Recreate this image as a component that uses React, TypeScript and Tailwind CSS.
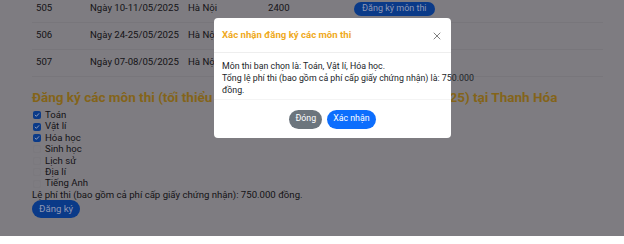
import { X } from 'lucide-react';

// Page behind the modal is drawn in its dimmed (backdrop) colours.
const rows = [
  { code: '505', date: 'Ngày 10-11/05/2025', place: 'Hà Nội', seats: '2400', action: true },
  { code: '506', date: 'Ngày 24-25/05/2025', place: 'Hà Nội', seats: '', action: false },
  { code: '507', date: 'Ngày 07-08/05/2025', place: 'Hà Nội', seats: '', action: false },
];

const subjects = [
  { name: 'Toán', checked: true },
  { name: 'Vật lí', checked: true },
  { name: 'Hóa học', checked: true },
  { name: 'Sinh học', checked: false },
  { name: 'Lịch sử', checked: false },
  { name: 'Địa lí', checked: false },
  { name: 'Tiếng Anh', checked: false },
];

function CheckBox({ checked }: { checked: boolean }) {
  if (!checked) return <span className="w-[8px] h-[8px] rounded-[2px] border border-[#7b797e] shrink-0" />;
  return (
    <span className="w-[8px] h-[8px] rounded-[2px] bg-[#0a3a88] flex items-center justify-center shrink-0">
      <svg viewBox="0 0 10 10" className="w-[6px] h-[6px]">
        <path d="M2 5.2l2 2 4-4.4" fill="none" stroke="#9aa3bd" strokeWidth="1.6" strokeLinecap="round" strokeLinejoin="round" />
      </svg>
    </span>
  );
}

export default function App() {
  return (
    <div className="relative w-[624px] h-[244px] overflow-hidden bg-white font-['Roboto',sans-serif]">
      <div className="h-[236px] bg-[#7e7c81] text-[#141316] px-[32px] overflow-hidden">
        <table className="-mt-[5px] w-[571px] border-collapse text-[9.6px]">
          <tbody>
            {rows.map((r) => (
              <tr key={r.code} className="h-[27px] border-b border-[#78767b]">
                <td className="w-[54px] pl-[4px]">{r.code}</td>
                <td className="w-[98px] pl-[4px]">{r.date}</td>
                <td className="w-[78px] pl-[4px]">{r.place}</td>
                <td className="w-[86px] pl-[6px]">{r.seats}</td>
                <td className="w-[153px] pl-[6px]">
                  {r.action && (
                    <span className="inline-flex items-center h-[14px] px-[8px] rounded-full bg-[#0a3a88] text-[#8f98b4] text-[9px]">
                      Đăng ký môn thi
                    </span>
                  )}
                </td>
                <td />
              </tr>
            ))}
          </tbody>
        </table>

        <h2 className="mt-[11px] text-[13.5px] leading-[18px] font-bold text-[#846419] whitespace-nowrap">
          Đăng ký các môn thi (tối thiểu 1 môn) cho kỳ thi đánh giá 7-08/05/2025) tại Thanh Hóa
        </h2>

        <div className="mt-[4px] flex flex-col">
          {subjects.map((s) => (
            <label key={s.name} className="flex items-center gap-[4px] h-[11.4px] pl-[1px] text-[9.6px]">
              <CheckBox checked={s.checked} />
              <span>{s.name}</span>
            </label>
          ))}
        </div>

        <p className="text-[9.6px] leading-[11px]">Lệ phí thi (bao gồm cả phí cấp giấy chứng nhận): 750.000 đồng.</p>
        <button className="block h-[18px] px-[7px] rounded-full bg-[#0a3a88] text-[#8f98b4] text-[9.6px] leading-[18px]">Đăng ký</button>
      </div>

      <div className="absolute left-[214px] top-[18px] w-[237px] h-[120px] bg-white rounded-[4px] flex flex-col text-[#212529]">
        <div className="h-[34px] flex items-center justify-between px-[8px] border-b border-[#eeeeee] mt-[1px]">
          <span className="text-[9.6px] font-bold text-[#efaa1d]">Xác nhận đăng ký các môn thi</span>
          <X className="w-[12px] h-[12px] text-[#555]" strokeWidth={1.5} />
        </div>
        <div className="px-[8px] pt-[7px] text-[8.8px] leading-[12px] h-[47px] border-b border-[#f4f4f4] whitespace-nowrap">
          <p>Môn thi bạn chọn là: Toán, Vật lí, Hóa học.</p>
          <p>
            Tổng lệ phí thi (bao gồm cả phí cấp giấy chứng nhận) là: 750.000
            <br />
            đồng.
          </p>
        </div>
        <div className="flex-1 flex items-center justify-center gap-[5px]">
          <button className="h-[19px] px-[6px] rounded-full bg-[#6c757d] text-white text-[8.8px]">Đóng</button>
          <button className="h-[19px] px-[6px] rounded-full bg-[#0d6efd] text-white text-[8.8px]">Xác nhận</button>
        </div>
      </div>
    </div>
  );
}
